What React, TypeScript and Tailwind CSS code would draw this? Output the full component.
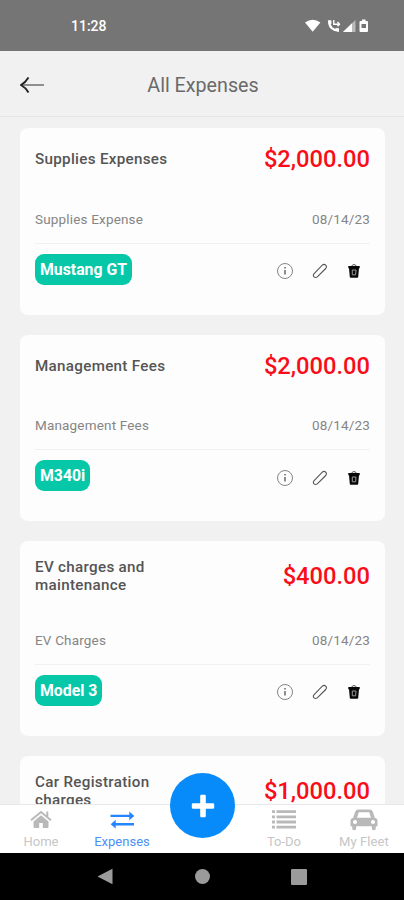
import clsx from "clsx";

type Expense = {
  title: string;
  amount: string;
  category?: string;
  date?: string;
  vehicle?: string;
};

const EXPENSES: Expense[] = [
  {
    title: "Supplies Expenses",
    amount: "$2,000.00",
    category: "Supplies Expense",
    date: "08/14/23",
    vehicle: "Mustang GT",
  },
  {
    title: "Management Fees",
    amount: "$2,000.00",
    category: "Management Fees",
    date: "08/14/23",
    vehicle: "M340i",
  },
  {
    title: "EV charges and maintenance",
    amount: "$400.00",
    category: "EV Charges",
    date: "08/14/23",
    vehicle: "Model 3",
  },
  { title: "Car Registration charges", amount: "$1,000.00" },
];

function StatusBar() {
  return (
    <div className="flex h-[51px] shrink-0 items-center justify-between bg-[#757575] pr-[35px] pl-[71px] text-white">
      <span className="text-[14px] leading-4 font-medium">11:28</span>
      <svg width="64" height="14" viewBox="0 0 64 14" fill="currentColor">
        <path d="M0 3.600Q7.700-2 15.400 3.600L7.700 12.800Z" />
        <path
          d="M24.200 2q-.3 4.300 2.400 7 2.500 2.400 6.400 2.500"
          fill="none"
          stroke="currentColor"
          strokeWidth="2.200"
        />
        <path d="M22.800 1.200h3.500l.3 3.300-2.500 1.300ZM34 13V9.300l-3.200-.4-1.500 2.600Z" />
        <path
          d="M28.800 1v4.200h5.500M32.500 3l2 2.200-2 2"
          fill="none"
          stroke="currentColor"
          strokeWidth="1.400"
        />
        <path d="M50.500 1v12H38Z" opacity=".5" />
        <path d="M47 4.300V13h-9Z" />
        <path
          fillRule="evenodd"
          d="M57 .5h3.500V2H62q1 0 1 1v9q0 1-1 1h-6.500q-1 0-1-1V3q0-1 1-1H57ZM56.500 5v4h4.500V5Z"
        />
      </svg>
    </div>
  );
}

function Header() {
  return (
    <header className="flex h-[66px] shrink-0 items-center border-b border-[#e6e6e6] bg-[#f1f1f1] pl-5">
      <button aria-label="Back" className="w-6 pt-0.5">
        <svg width="24" height="18" viewBox="0 0 24 18" fill="none">
          <path d="M2 9h22" stroke="#777" strokeWidth="1.600" />
          <path d="M8.500 1.500Q5.500 6.500 1 9q4.500 2.500 7.500 7.500" stroke="#222" strokeWidth="1.900" />
        </svg>
      </button>
      <h1 className="flex-1 pt-1 pr-[42px] text-center text-[19.700px] leading-6 font-normal text-[#6a6a6a]">
        All Expenses
      </h1>
    </header>
  );
}

function InfoIcon() {
  return (
    <svg width="18" height="18" viewBox="0 0 18 18" fill="none" stroke="#858585">
      <circle cx="9" cy="9" r="7.500" />
      <path d="M9 8v4.500M9 5v1.600" stroke="#444" strokeWidth="1.200" />
    </svg>
  );
}

function PencilIcon() {
  return (
    <svg width="16" height="16" viewBox="0 0 16 16" fill="none" stroke="#555" strokeWidth="1.100">
      <path d="M1.900 10.800 10.300 2.200Q12.100.7 13.700 2.100q1.500 1.700 0 3.400L5.300 13.900q-1.800 1.200-3.300 0-1.300-1.500-.1-3.100Z" />
    </svg>
  );
}

function TrashIcon() {
  return (
    <svg width="12" height="14" viewBox="0 0 12 14" fill="none">
      <path d="M3.800 2Q4.200.6 6 .6T8.200 2" stroke="#555" />
      <path d="M.3 1.900h11.400v2.300H11L10.200 13q-.1.800-.9.800H2.700q-.8 0-.9-.8L1 4.200H.3Z" fill="#080808" />
      <path d="M4.300 6v4.800h3.300L8 6Z" stroke="#999" />
    </svg>
  );
}

function ExpenseCard({ expense }: { expense: Expense }) {
  return (
    <article className="min-h-[186.500px] shrink-0 rounded-lg bg-[#fdfdfd] px-[15px] pt-[17px] pb-[30px]">
      <div className="flex min-h-[28.500px] items-center justify-between">
        <h2 className="w-[150px] text-[15.200px] leading-[18.400px] font-medium tracking-[0.3px] text-[#555]">
          {expense.title}
        </h2>
        <p className="text-[23.700px] leading-[28px] font-medium text-[#f80d19]">{expense.amount}</p>
      </div>
      {expense.category && (
        <div className="mt-9 flex justify-between border-b border-[#f1f1f1] pb-[15px] text-[13.500px] leading-[18px] tracking-[0.17px] text-[#858585]">
          <span>{expense.category}</span>
          <span>{expense.date}</span>
        </div>
      )}
      {expense.vehicle && (
        <div className="mt-[10px] flex items-center justify-between">
          <span className="rounded-[9px] bg-[#06c8a9] px-[5px] text-[15.800px] leading-[31px] font-bold text-white">
            {expense.vehicle}
          </span>
          <div className="flex items-center pt-1 pr-[10px]">
            <button aria-label="Details">
              <InfoIcon />
            </button>
            <button aria-label="Edit" className="ml-[18px]">
              <PencilIcon />
            </button>
            <button aria-label="Delete" className="ml-5">
              <TrashIcon />
            </button>
          </div>
        </div>
      )}
    </article>
  );
}

function HomeIcon() {
  return (
    <svg width="22" height="19" viewBox="0 0 22 19" fill="currentColor">
      <path d="M11 5.300 18.500 11.500V17q0 1-1 1h-4.700v-5H9.200v5H4.500q-1 0-1-1v-5.500Z" />
      <path d="M1 10.300 11 2l10 8.300M17.300 1.500v5.300" fill="none" stroke="currentColor" strokeWidth="2" />
    </svg>
  );
}

function TransferIcon() {
  return (
    <svg width="25" height="18" viewBox="0 0 25 18" fill="currentColor">
      <path d="M.5 3.700h18.800V.5l5 4.400-5 4.400V6.100H.5ZM24 12H5.700V8.800l-5 4.400 5 4.400v-3.200H24Z" />
    </svg>
  );
}

function ListIcon() {
  return (
    <svg width="24" height="19" viewBox="0 0 24 19" fill="currentColor">
      <path d="M0 .2h3v2.800H0ZM4.500.2H24v2.800H4.500ZM0 5.400h3v2.800H0ZM4.500 5.400H24v2.800H4.500ZM0 10.600h3v2.800H0ZM4.500 10.600H24v2.800H4.500ZM0 15.800h3v2.800H0ZM4.500 15.800H24v2.800H4.500Z" />
    </svg>
  );
}

function CarIcon() {
  return (
    <svg width="28" height="22" viewBox="0 0 28 22" fill="currentColor">
      <path
        fillRule="evenodd"
        d="M8.500.5h11q2.600 0 3.400 2.400l1.900 5.900q2.700.5 2.700 3.400v5.100h-1.700v2q0 2-2 2t-2-2v-2H6.200v2q0 2-2 2t-2-2v-2H.5v-5.100q0-2.900 2.700-3.400l1.900-5.900Q5.900.5 8.500.5ZM8.800 3.200 7 8.700h14l-1.800-5.500ZM5 11a2 2 0 1 0 .01 0ZM23 11a2 2 0 1 0 .01 0Z"
      />
    </svg>
  );
}

function Tab({
  label,
  icon,
  active,
  className,
}: {
  label: string;
  icon: React.ReactNode;
  active?: boolean;
  className?: string;
}) {
  return (
    <button
      className={clsx(
        "flex flex-col items-center text-[13px] leading-4",
        active ? "text-[#2585ff]" : "text-[#b9b9b9]",
        className,
      )}
    >
      <span className="flex h-[29px] items-center">{icon}</span>
      <span className={active ? "text-[#4c91f7]" : "text-[#c6c6c6]"}>{label}</span>
    </button>
  );
}

function TabBar() {
  return (
    <nav className="relative flex h-[49px] shrink-0 border-t border-[#e9e9e9] bg-white">
      <Tab label="Home" icon={<HomeIcon />} className="w-[82px]" />
      <Tab label="Expenses" icon={<TransferIcon />} active className="w-20" />
      <div className="w-[82px]" />
      <Tab label="To-Do" icon={<ListIcon />} className="w-20" />
      <Tab label="My Fleet" icon={<CarIcon />} className="w-20 tracking-[0.1px]" />
      <button
        aria-label="Add expense"
        className="absolute -top-8 left-[170px] flex size-[65px] items-center justify-center rounded-full bg-[#078bfb] text-white"
      >
        <svg width="24" height="24" viewBox="0 0 24 24" fill="currentColor">
          <path d="M10.400.8h3.200q1.200 0 1.200 1.200v7.200H22q1.200 0 1.200 1.200v3.200q0 1.200-1.200 1.200h-7.200V22q0 1.200-1.200 1.200h-3.200q-1.200 0-1.200-1.200v-7.200H2q-1.200 0-1.200-1.200v-3.200Q.8 9.200 2 9.200h7.200V2Q9.200.8 10.400.8Z" />
        </svg>
      </button>
    </nav>
  );
}

function SystemBar() {
  return (
    <div className="flex h-[47px] shrink-0 items-center justify-between bg-black px-[97px] text-[#9b9b9b]">
      <svg width="16" height="17" viewBox="0 0 16 17" fill="currentColor">
        <path d="M15.500.8v15.400L.5 8.500Z" />
      </svg>
      <span className="size-[15px] rounded-full bg-[#9b9b9b]" />
      <span className="size-4 rounded-[1px] bg-[#9b9b9b]" />
    </div>
  );
}

export default function App() {
  return (
    <div className="flex h-[900px] w-[404px] flex-col overflow-hidden bg-[#f1f1f1] font-[Roboto,sans-serif]">
      <StatusBar />
      <Header />
      <main className="flex min-h-0 flex-1 flex-col gap-5 overflow-hidden pt-[11px] pr-[19px] pl-5">
        {EXPENSES.map((expense) => (
          <ExpenseCard key={expense.title} expense={expense} />
        ))}
      </main>
      <TabBar />
      <SystemBar />
    </div>
  );
}
